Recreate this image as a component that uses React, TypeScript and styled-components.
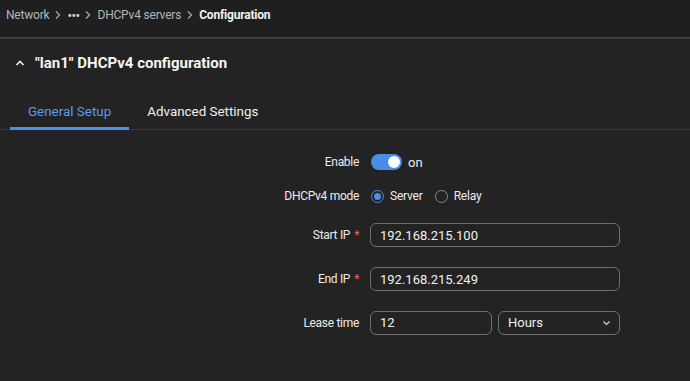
import styled, { createGlobalStyle } from 'styled-components';

const GlobalStyle = createGlobalStyle`
  html, body {
    margin: 0;
    padding: 0;
    background: #232323;
    font-family: Roboto, "Noto Sans", sans-serif;
    color: #ececec;
  }
`;

const Page = styled.div`
  width: 690px;
  height: 381px;
  overflow: hidden;
  background: #232323;
`;

const TopBar = styled.div`
  height: 39px;
  box-sizing: border-box;
  display: flex;
  align-items: center;
  gap: 5px;
  padding: 0 6px 7px;
  background: #1f1f1f;
  border-bottom: 2px solid #443e48;
  font-size: 12px;
  letter-spacing: -0.2px;
`;

const Crumb = styled.span<{ $current?: boolean }>`
  color: ${(p) => (p.$current ? '#f2f2f2' : '#b4b4b4')};
  font-weight: ${(p) => (p.$current ? 700 : 400)};
`;

const Sep = styled.span`
  display: flex;
  align-items: center;
`;

const Dots = styled.span`
  color: #d0d0d0;
  font-weight: 700;
  letter-spacing: -0.5px;
  font-size: 12.5px;
`;

const TitleRow = styled.div`
  display: flex;
  align-items: center;
  gap: 10px;
  padding: 12px 0 0 15px;
  height: 23px;
  font-size: 15px;
  font-weight: 700;
  color: #f4f4f4;
`;

const Tabs = styled.div`
  display: flex;
  margin-top: 25px;
  padding-left: 10px;
  border-bottom: 1px solid #3b3b3b;
`;

const Tab = styled.div<{ $active?: boolean }>`
  padding: 0 18px 3px;
  height: 25px;
  display: flex;
  align-items: center;
  font-size: 13.4px;
  color: ${(p) => (p.$active ? '#5c9bf0' : '#f0f0f0')};
  border-bottom: 3px solid ${(p) => (p.$active ? '#4d8ff0' : 'transparent')};
  margin-bottom: -1px;
`;

const Form = styled.div`
  display: grid;
  grid-template-columns: 359px 250px;
  column-gap: 11px;
  padding-top: 15px;
`;

const Label = styled.div<{ $h: number }>`
  height: ${(p) => p.$h}px;
  display: flex;
  align-items: center;
  justify-content: flex-end;
  font-size: 12px;
  letter-spacing: -0.3px;
  color: #ececec;
`;

const Star = styled.span`
  color: #e8655c;
  margin-left: 4px;
`;

const Control = styled.div<{ $h: number }>`
  height: ${(p) => p.$h}px;
  display: flex;
  align-items: center;
  gap: 6px;
  font-size: 13px;
`;

const Toggle = styled.div`
  width: 31px;
  height: 16px;
  border-radius: 8px;
  background: #4a8de8;
  position: relative;
  margin-left: 1px;
`;

const Knob = styled.div`
  position: absolute;
  right: 2px;
  top: 2px;
  width: 12px;
  height: 12px;
  border-radius: 50%;
  background: #ffffff;
`;

const Radio = styled.div<{ $checked?: boolean }>`
  width: 11px;
  height: 11px;
  border-radius: 50%;
  border: 1px solid ${(p) => (p.$checked ? '#4a8de8' : '#8a8a8a')};
  display: flex;
  align-items: center;
  justify-content: center;
  margin-left: 1px;
  &::after {
    content: '';
    width: 7px;
    height: 7px;
    border-radius: 50%;
    background: ${(p) => (p.$checked ? '#4a8de8' : 'transparent')};
  }
`;

const RadioLabel = styled.span<{ $gap?: number }>`
  font-size: 12px;
  letter-spacing: -0.2px;
  margin-right: ${(p) => p.$gap ?? 0}px;
`;

const Input = styled.div<{ $w?: number }>`
  width: ${(p) => (p.$w ? `${p.$w}px` : '100%')};
  height: 24px;
  box-sizing: border-box;
  border: 1px solid #6e6e6e;
  border-radius: 6px;
  display: flex;
  align-items: center;
  justify-content: space-between;
  padding: 0 10px 0 9px;
  font-size: 13px;
  color: #f0f0f0;
`;

const Select = styled(Input)`
  padding-right: 8px;
`;

const Pair = styled.div`
  display: flex;
  gap: 6px;
  width: 100%;
`;

function Chevron() {
  return (
    <svg width="8" height="10" viewBox="0 0 8 10">
      <path d="M2 1.5 L5.5 5 L2 8.5" fill="none" stroke="#a8a8a8" strokeWidth="1.3" />
    </svg>
  );
}

export default function App() {
  return (
    <Page>
      <GlobalStyle />
      <TopBar>
        <Crumb>Network</Crumb>
        <Sep><Chevron /></Sep>
        <Dots>•••</Dots>
        <Sep><Chevron /></Sep>
        <Crumb>DHCPv4 servers</Crumb>
        <Sep><Chevron /></Sep>
        <Crumb $current>Configuration</Crumb>
      </TopBar>
      <TitleRow>
        <svg width="10" height="8" viewBox="0 0 10 8">
          <path d="M1.5 6 L5 2.5 L8.5 6" fill="none" stroke="#f0f0f0" strokeWidth="1.6" />
        </svg>
        <span>"lan1" DHCPv4 configuration</span>
      </TitleRow>
      <Tabs>
        <Tab $active>General Setup</Tab>
        <Tab>Advanced Settings</Tab>
      </Tabs>
      <Form>
        <Label $h={34}>Enable</Label>
        <Control $h={34}>
          <Toggle><Knob /></Toggle>
          <span>on</span>
        </Control>
        <Label $h={34}>DHCPv4 mode</Label>
        <Control $h={34}>
          <Radio $checked />
          <RadioLabel $gap={5}>Server</RadioLabel>
          <Radio />
          <RadioLabel>Relay</RadioLabel>
        </Control>
        <Label $h={44}>Start IP<Star>*</Star></Label>
        <Control $h={44}><Input>192.168.215.100</Input></Control>
        <Label $h={44}>End IP<Star>*</Star></Label>
        <Control $h={44}><Input>192.168.215.249</Input></Control>
        <Label $h={43}>Lease time</Label>
        <Control $h={43}>
          <Pair>
            <Input $w={122}>12</Input>
            <Select $w={122}>
              Hours
              <svg width="9" height="6" viewBox="0 0 9 6">
                <path d="M1.5 1.5 L4.5 4.5 L7.5 1.5" fill="none" stroke="#d8d8d8" strokeWidth="1.2" />
              </svg>
            </Select>
          </Pair>
        </Control>
      </Form>
    </Page>
  );
}
